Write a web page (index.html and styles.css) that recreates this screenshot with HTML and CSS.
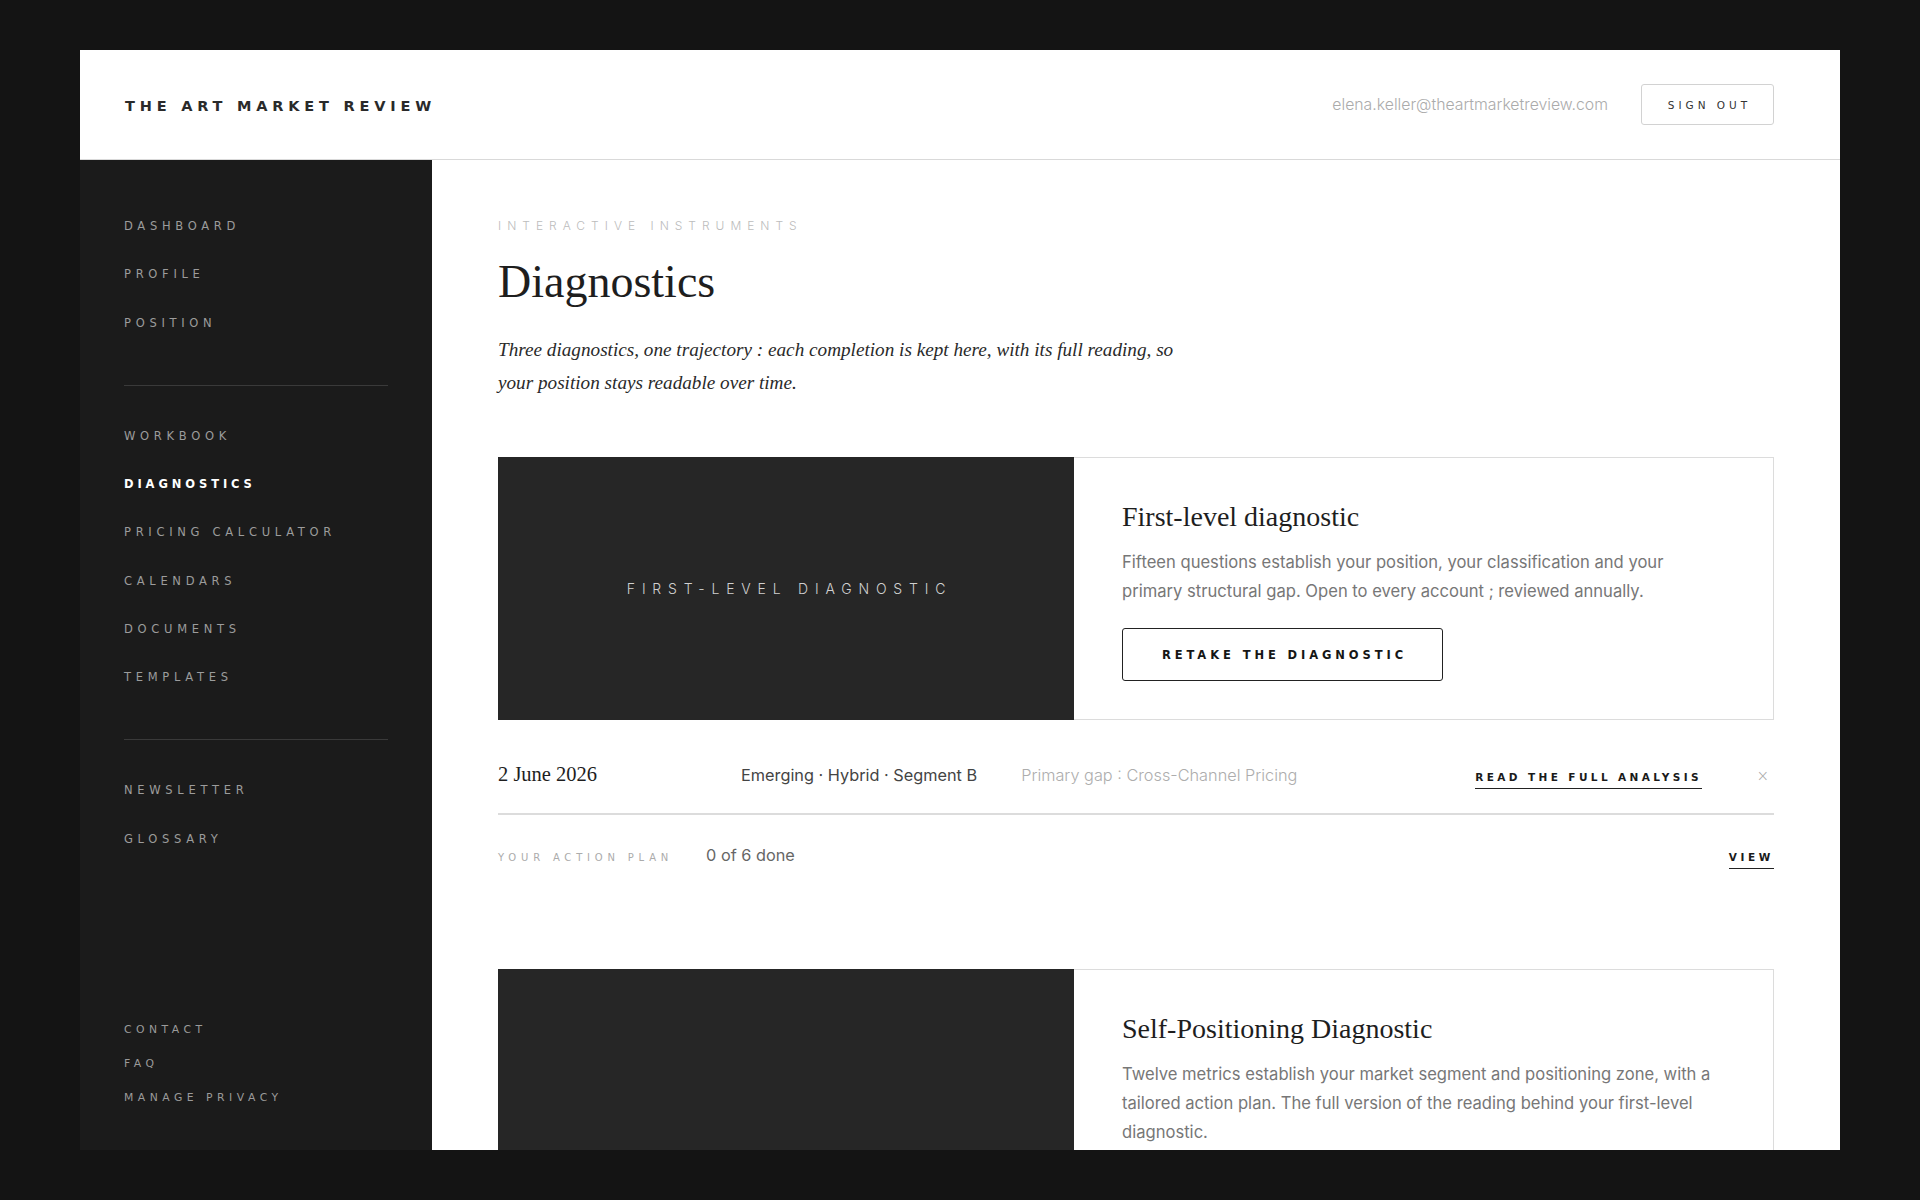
FILE: index.html
```
<!DOCTYPE html>
<html lang="en">
<head>
<meta charset="utf-8">
<title>Diagnostics — The Art Market Review</title>
<link rel="stylesheet" href="styles.css">
</head>
<body>
<div class="frame">
  <header class="topbar">
    <div class="logo">THE ART MARKET REVIEW</div>
    <div class="account">
      <span class="email">elena.keller@theartmarketreview.com</span>
      <button class="btn-ghost">SIGN OUT</button>
    </div>
  </header>
  <div class="layout">
    <aside class="sidebar">
      <nav class="nav-group">
        <a class="nav-link">DASHBOARD</a>
        <a class="nav-link">PROFILE</a>
        <a class="nav-link">POSITION</a>
      </nav>
      <div class="nav-divider"></div>
      <nav class="nav-group">
        <a class="nav-link">WORKBOOK</a>
        <a class="nav-link active">DIAGNOSTICS</a>
        <a class="nav-link">PRICING CALCULATOR</a>
        <a class="nav-link">CALENDARS</a>
        <a class="nav-link">DOCUMENTS</a>
        <a class="nav-link">TEMPLATES</a>
      </nav>
      <div class="nav-divider"></div>
      <nav class="nav-group">
        <a class="nav-link">NEWSLETTER</a>
        <a class="nav-link">GLOSSARY</a>
      </nav>
      <nav class="nav-footer">
        <a class="foot-link">CONTACT</a>
        <a class="foot-link">FAQ</a>
        <a class="foot-link">MANAGE PRIVACY</a>
      </nav>
    </aside>
    <main class="main">
      <div class="eyebrow">INTERACTIVE INSTRUMENTS</div>
      <h1 class="title">Diagnostics</h1>
      <p class="lede">Three diagnostics, one trajectory : each completion is kept here, with its full reading, so your position stays readable over time.</p>

      <section class="diag">
        <div class="card">
          <div class="card-visual"><span class="visual-label">FIRST-LEVEL DIAGNOSTIC</span></div>
          <div class="card-body">
            <h2 class="card-title">First-level diagnostic</h2>
            <p class="card-text">Fifteen questions establish your position, your classification and your primary structural gap. Open to every account ; reviewed annually.</p>
            <a class="btn-outline">RETAKE THE DIAGNOSTIC</a>
          </div>
        </div>
        <div class="result-row">
          <span class="result-date">2 June 2026</span>
          <span class="result-tags">Emerging · Hybrid · Segment B</span>
          <span class="result-gap">Primary gap : Cross-Channel Pricing</span>
          <a class="text-link">READ THE FULL ANALYSIS</a>
          <span class="result-close">×</span>
        </div>
        <div class="plan-row">
          <span class="plan-label">YOUR ACTION PLAN</span>
          <span class="plan-count">0 of 6 done</span>
          <a class="text-link plan-view">VIEW</a>
        </div>
      </section>

      <section class="diag">
        <div class="card card-tall">
          <div class="card-visual"></div>
          <div class="card-body">
            <h2 class="card-title">Self-Positioning Diagnostic</h2>
            <p class="card-text">Twelve metrics establish your market segment and positioning zone, with a tailored action plan. The full version of the reading behind your first-level diagnostic.</p>
            <a class="btn-outline">TAKE THE DIAGNOSTIC</a>
          </div>
        </div>
      </section>
    </main>
  </div>
</div>
</body>
</html>
```

FILE: styles.css
```
* { box-sizing: border-box; }

html, body {
  margin: 0;
  height: 100%;
}

body {
  background: #141414;
  padding: 50px 80px;
  font-family: Inter, "Liberation Sans", sans-serif;
}

.frame {
  width: 1760px;
  height: 1100px;
  background: #fff;
  display: flex;
  flex-direction: column;
  overflow: hidden;
}

/* Top bar */
.topbar {
  height: 110px;
  flex: none;
  border-bottom: 1px solid #d9d9d9;
  display: flex;
  align-items: center;
  justify-content: space-between;
  padding: 0 66px 0 45px;
}

.logo {
  font-family: "DejaVu Sans", sans-serif;
  font-weight: 700;
  font-size: 14.5px;
  letter-spacing: 4.8px;
  color: #2a2a2a;
  margin-top: 3px;
}

.account {
  display: flex;
  align-items: center;
  gap: 33px;
}

.email {
  font-family: Inter, sans-serif;
  font-size: 15.8px;
  color: #ababab;
  font-weight: 300;
}

.btn-ghost {
  width: 133px;
  height: 41px;
  background: #fff;
  border: 1px solid #d2d2d2;
  border-radius: 3px;
  font-family: "DejaVu Sans", sans-serif;
  font-size: 10.5px;
  letter-spacing: 4px;
  padding: 0 0 0 4px;
  color: #333;
}

/* Layout */
.layout {
  flex: 1;
  display: flex;
  min-height: 0;
}

.sidebar {
  width: 352px;
  flex: none;
  background: #1b1b1b;
  padding: 42px 44px 35px;
  display: flex;
  flex-direction: column;
}

.nav-group {
  display: flex;
  flex-direction: column;
}

.nav-link {
  display: block;
  font-family: "DejaVu Sans", sans-serif;
  font-size: 11.5px;
  line-height: 16.25px;
  padding: 16px 0;
  letter-spacing: 4.7px;
  color: #9c9c9c;
}

.nav-link.active {
  color: #fff;
  font-weight: 700;
  letter-spacing: 3.9px;
}

.nav-divider {
  height: 1px;
  background: #3a3a3a;
  margin: 38px 0 26px;
}

.nav-footer {
  margin-top: auto;
  display: flex;
  flex-direction: column;
}

.foot-link {
  display: block;
  font-family: "DejaVu Sans", sans-serif;
  font-size: 10.8px;
  line-height: 14px;
  padding: 10px 0;
  letter-spacing: 4.5px;
  color: #9a9a9a;
}

/* Main */
.main {
  flex: 1;
  min-width: 0;
  padding: 60px 66px 0 66px;
  overflow: hidden;
}

.eyebrow {
  font-family: Inter, sans-serif;
  font-weight: 300;
  font-size: 12px;
  line-height: 12px;
  letter-spacing: 6px;
  color: #bcbcbc;
}

.title {
  font-family: "Liberation Serif", serif;
  font-weight: 400;
  font-size: 46px;
  line-height: 50px;
  margin: 25px 0 0;
  color: #1e1e1e;
}

.lede {
  font-family: "Liberation Serif", serif;
  font-style: italic;
  font-size: 19.2px;
  line-height: 33px;
  color: #2a2a2a;
  max-width: 690px;
  margin: 26px 0 0;
}

.diag {
  margin-top: 58px;
}

.diag + .diag {
  margin-top: 84px;
}

.card {
  display: grid;
  grid-template-columns: 576px 1fr;
  min-height: 263px;
}

.card-tall {
  min-height: 380px;
}

.card-visual {
  background: #262626;
  display: flex;
  align-items: center;
  justify-content: center;
}

.visual-label {
  font-family: Inter, sans-serif;
  font-weight: 300;
  font-size: 14px;
  letter-spacing: 6.8px;
  color: #d0d0d0;
  margin-right: -7px;
}

.card-body {
  border: 1px solid #dcdcdc;
  border-left: none;
  padding: 42px 48px 38px;
  display: flex;
  flex-direction: column;
  align-items: flex-start;
}

.card-title {
  font-family: "Liberation Serif", serif;
  font-weight: 400;
  font-size: 28px;
  line-height: 34px;
  margin: 0;
  color: #1e1e1e;
}

.card-text {
  font-family: Inter, sans-serif;
  font-size: 16.6px;
  line-height: 29px;
  color: #777;
  margin: 14px 0 0;
  max-width: 600px;
}

.btn-outline {
  display: flex;
  align-items: center;
  justify-content: center;
  margin-top: 22px;
  width: 321px;
  height: 53px;
  border: 1.5px solid #222;
  border-radius: 3px;
  font-family: "DejaVu Sans", sans-serif;
  font-weight: 700;
  font-size: 11.5px;
  letter-spacing: 3.9px;
  color: #161616;
  padding-left: 4px;
}

/* Result row */
.result-row {
  display: grid;
  grid-template-columns: 199px auto 1fr auto 28px;
  column-gap: 44px;
  align-items: baseline;
  padding: 42px 0 24px;
  border-bottom: 2px solid #dcdcdc;
}

.result-date {
  font-family: "Liberation Serif", serif;
  font-size: 20.5px;
  line-height: 24px;
  color: #1e1e1e;
}

.result-tags {
  font-family: Inter, sans-serif;
  font-size: 16.3px;
  color: #444;
}

.result-gap {
  font-family: Inter, sans-serif;
  font-size: 16.3px;
  color: #adadad;
  font-weight: 300;
}

.text-link {
  font-family: "DejaVu Sans", sans-serif;
  font-weight: 700;
  font-size: 10.5px;
  letter-spacing: 3.4px;
  color: #1a1a1a;
  padding-bottom: 4px;
  border-bottom: 1.5px solid #222;
  line-height: 14px;
}

.result-close {
  text-align: right;
  padding-right: 5px;
  font-family: "DejaVu Sans", sans-serif;
  font-size: 15px;
  font-weight: 300;
  color: #a8a8a8;
}

/* Plan row */
.plan-row {
  display: flex;
  align-items: baseline;
  gap: 33px;
  padding: 30px 0 16px;
}

.plan-label {
  font-family: "DejaVu Sans", sans-serif;
  font-size: 10px;
  letter-spacing: 4.8px;
  color: #ababab;
}

.plan-count {
  font-family: Inter, sans-serif;
  font-size: 16.3px;
  color: #666;
}

.plan-view {
  margin-left: auto;
  letter-spacing: 3.6px;
}
```
